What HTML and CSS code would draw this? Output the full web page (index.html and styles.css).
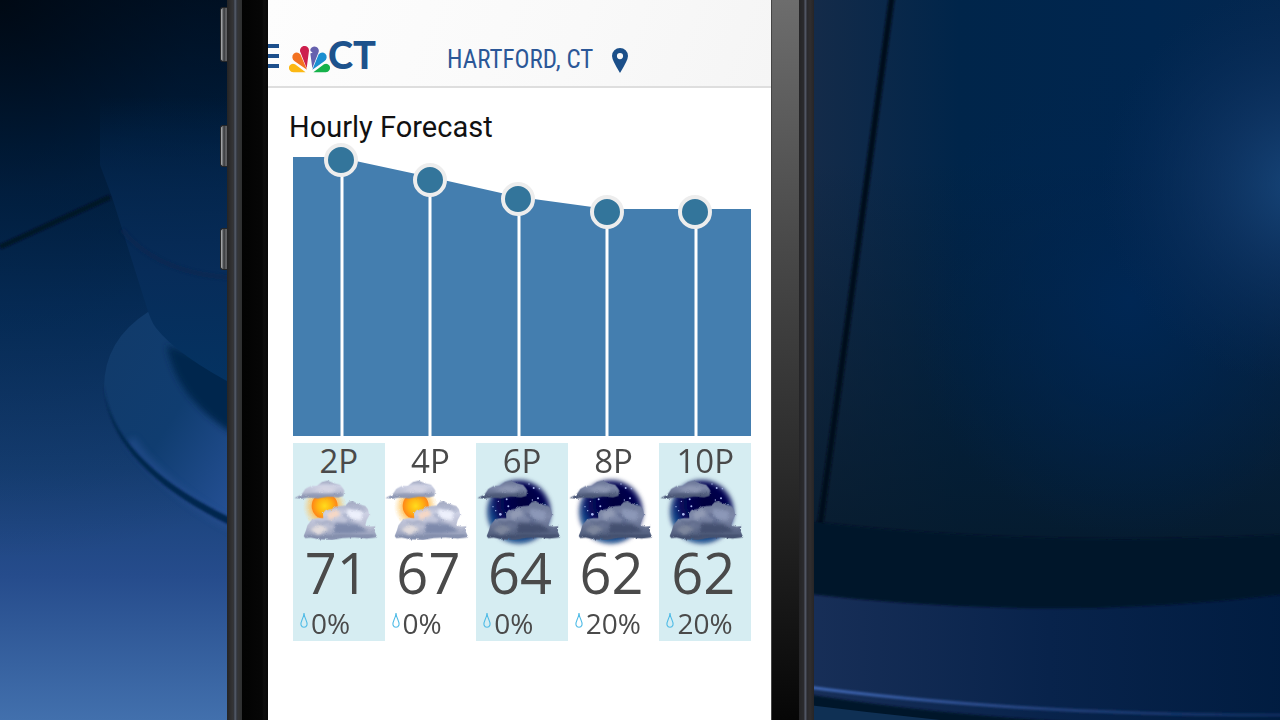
FILE: index.html
```
<!DOCTYPE html>
<html lang="en">
<head>
    <meta charset="UTF-8">
    <meta name="viewport" content="width=device-width, initial-scale=1.0">
    <title>Hourly Forecast - Hartford, CT</title>
    <link rel="stylesheet" href="styles.css">
</head>
<body>
    <!-- studio backdrop -->
    <svg class="backdrop" viewBox="0 0 1280 720" preserveAspectRatio="none" aria-hidden="true">
        <defs>
            <linearGradient id="leftBg" gradientUnits="userSpaceOnUse" x1="60" y1="0" x2="60" y2="720">
                <stop offset="0" stop-color="#001226"/>
                <stop offset=".2" stop-color="#002348"/>
                <stop offset=".42" stop-color="#063365"/>
                <stop offset=".65" stop-color="#164076"/>
                <stop offset=".8" stop-color="#264c8c"/>
                <stop offset="1" stop-color="#4270ad"/>
            </linearGradient>
            <linearGradient id="panelBg" x1="0" y1="0" x2="0" y2="1">
                <stop offset=".25" stop-color="#022750" stop-opacity="0"/>
                <stop offset=".5" stop-color="#052851" stop-opacity=".8"/>
                <stop offset=".7" stop-color="#072c59"/>
                <stop offset="1" stop-color="#043362"/>
            </linearGradient>
            <radialGradient id="leftShade" gradientUnits="userSpaceOnUse" cx="0" cy="0" r="560">
                <stop offset="0" stop-color="#00060e" stop-opacity=".75"/>
                <stop offset=".35" stop-color="#000c1c" stop-opacity=".35"/>
                <stop offset="1" stop-color="#000814" stop-opacity="0"/>
            </radialGradient>
            <linearGradient id="discBg" x1="0" y1="0" x2="1" y2="1">
                <stop offset="0" stop-color="#113a69"/>
                <stop offset=".5" stop-color="#103d70"/>
                <stop offset="1" stop-color="#28539a"/>
            </linearGradient>
            <linearGradient id="rightBg" x1="0" y1="0" x2="1" y2="0">
                <stop offset=".27" stop-color="#142b49"/>
                <stop offset=".5" stop-color="#00254a"/>
                <stop offset=".8" stop-color="#00264f"/>
                <stop offset="1" stop-color="#04274f"/>
            </linearGradient>
            <linearGradient id="rightShade" x1="0" y1="0" x2="0" y2="1">
                <stop offset=".3" stop-color="#061b2c" stop-opacity="0"/>
                <stop offset="1" stop-color="#061a2b" stop-opacity=".85"/>
            </linearGradient>
            <radialGradient id="glow">
                <stop offset="0" stop-color="#1a4a80"/>
                <stop offset=".4" stop-color="#12396a" stop-opacity=".75"/>
                <stop offset="1" stop-color="#0a2c5a" stop-opacity="0"/>
            </radialGradient>
            <radialGradient id="blueWash">
                <stop offset="0" stop-color="#002754"/>
                <stop offset="1" stop-color="#00244e" stop-opacity="0"/>
            </radialGradient>
            <linearGradient id="floorBg" x1="0" y1="0" x2="1" y2="0">
                <stop offset="0" stop-color="#182f58"/>
                <stop offset=".5" stop-color="#08234b"/>
                <stop offset="1" stop-color="#001c40"/>
            </linearGradient>
            <linearGradient id="rimBg" gradientUnits="userSpaceOnUse" x1="800" y1="0" x2="1300" y2="0">
                <stop offset="0" stop-color="#426ab8"/>
                <stop offset=".5" stop-color="#24427d"/>
                <stop offset="1" stop-color="#0e2c5c"/>
            </linearGradient>
            <filter id="soft"><feGaussianBlur stdDeviation="1"/></filter>
            <filter id="softer"><feGaussianBlur stdDeviation="3"/></filter>
        </defs>

        <rect width="640" height="720" fill="url(#leftBg)"/>
        <rect width="640" height="720" fill="url(#leftShade)"/>
        <path d="M0 247 L110 197" stroke="#001226" stroke-width="5" filter="url(#soft)"/>
        <path d="M148 312 Q104 340 104 388 C108 440 160 490 240 526 V330 Z" fill="url(#discBg)"/>
        <path d="M130 440 Q170 495 240 530" fill="none" stroke="#2a5397" stroke-width="10" opacity=".5" filter="url(#softer)"/>
        <path d="M104 384 C108 438 160 486 240 522 L240 530 C160 493 106 445 104 384 Z" fill="#03264e" filter="url(#soft)"/>
        <path d="M167 345 Q175 400 240 438 V370 Z" fill="#05284e" filter="url(#softer)"/>
        <path d="M100 0 V165 L112 197 L146 305 Q151 322 156 328 Q178 356 240 388 V0 Z" fill="url(#panelBg)"/>
        <path d="M122 230 Q160 276 240 278" fill="none" stroke="#0c2850" stroke-width="5" opacity=".6" filter="url(#soft)"/>

        <rect x="640" width="640" height="720" fill="url(#rightBg)"/>
        <rect x="640" width="640" height="540" fill="url(#rightShade)"/>
        <ellipse cx="1130" cy="300" rx="220" ry="240" fill="url(#blueWash)"/>
        <ellipse cx="1300" cy="185" rx="200" ry="200" fill="url(#glow)" opacity=".85"/>
        <path d="M892 -4 L820 526" stroke="#00101f" stroke-width="6" filter="url(#soft)"/>
        <path d="M800 590 Q1060 625 1300 590 V720 H800 Z" fill="url(#floorBg)"/>
        <path d="M800 520 Q1020 548 1300 534 V592 Q1060 624 800 593 Z" fill="#00122a" filter="url(#soft)"/>
        <path d="M800 693 Q940 716 1110 724 H800 Z" fill="#00152b" filter="url(#soft)"/>
        <path d="M800 686 Q1020 716 1300 715" fill="none" stroke="url(#rimBg)" stroke-width="3" filter="url(#soft)"/>
        <path d="M800 704 Q880 714 960 722 H800 Z" fill="#0f3054"/>
    </svg>

    <!-- shared icon drawings -->
    <svg class="sprite" aria-hidden="true">
        <defs>
            <filter id="ragged" x="-10%" y="-10%" width="120%" height="120%" color-interpolation-filters="sRGB">
                <feTurbulence type="fractalNoise" baseFrequency=".12" numOctaves="3" seed="8" result="noise"/>
                <feDisplacementMap in="SourceGraphic" in2="noise" scale="7" xChannelSelector="R" yChannelSelector="G"/>
            </filter>
            <filter id="haze" x="-20%" y="-20%" width="140%" height="140%"><feGaussianBlur stdDeviation="7"/></filter>
            <filter id="puff" x="-30%" y="-30%" width="160%" height="160%"><feGaussianBlur stdDeviation="4"/></filter>
            <radialGradient id="sunFill">
                <stop offset="0" stop-color="#ffdc1c"/>
                <stop offset=".55" stop-color="#ffb313"/>
                <stop offset="1" stop-color="#ff8418"/>
            </radialGradient>
            <radialGradient id="sunGlow">
                <stop offset=".5" stop-color="#ffb240" stop-opacity=".95"/>
                <stop offset=".75" stop-color="#ffc35a" stop-opacity=".5"/>
                <stop offset="1" stop-color="#ffd98a" stop-opacity="0"/>
            </radialGradient>
            <radialGradient id="nightFill" cx=".58" cy=".35" r=".68">
                <stop offset="0" stop-color="#03023c"/>
                <stop offset=".65" stop-color="#07085a"/>
                <stop offset="1" stop-color="#146aa8"/>
            </radialGradient>
            <linearGradient id="dayCloud" x1="0" y1="0" x2="0" y2="1">
                <stop offset="0" stop-color="#a0a7c0"/>
                <stop offset=".3" stop-color="#cdd1e4"/>
                <stop offset=".65" stop-color="#b8bdd2"/>
                <stop offset="1" stop-color="#8691b0"/>
            </linearGradient>
            <linearGradient id="nightCloud" x1="0" y1="0" x2="0" y2="1">
                <stop offset="0" stop-color="#6c7898"/>
                <stop offset=".4" stop-color="#7e89a9"/>
                <stop offset="1" stop-color="#465372"/>
            </linearGradient>
            <path id="cloudTop" d="M1 72 L22 62 L34 44 L50 36 L68 36 L84 24 L101 20 L122 28 L138 32 L146 42 L151 50 L148 66 L132 70 L102 67 L72 73 L40 70 L22 74 Z"/>
            <path id="cloudLow" d="M29 186 L36 168 L40 154 L54 136 L72 132 L88 132 L87 118 L94 108 L112 106 L126 98 L154 95 L164 84 L176 82 L196 91 L214 96 L222 106 L226 124 L218 138 L214 154 L230 158 L244 156 L242 172 L250 190 L218 194 L182 190 L146 192 L114 198 L72 196 L50 190 L34 192 Z"/>
        </defs>
        <symbol id="icon-day" viewBox="0 0 252 228">
            <circle cx="92" cy="98" r="66" fill="url(#sunGlow)" filter="url(#ragged)"/>
            <circle cx="92" cy="96" r="39" fill="url(#sunFill)"/>
            <g filter="url(#ragged)">
                <use href="#cloudTop" fill="url(#dayCloud)"/>
                <path d="M50 50 L90 35 L130 42 L112 56 Z" fill="#d6d6e4" filter="url(#puff)"/>
                <path d="M20 70 L60 62 L92 66 L142 60" fill="none" stroke="#7a84a2" stroke-width="6" opacity=".7" filter="url(#puff)"/>
                <use href="#cloudLow" fill="url(#dayCloud)"/>
                <path d="M98 120 L126 106 L140 122 L106 138 Z" fill="#f8d8c4" filter="url(#puff)"/>
                <path d="M160 104 L206 112 L202 140 L160 132 Z" fill="#edf0fc" filter="url(#puff)"/>
                <path d="M146 120 L166 134 L160 148 L180 144" fill="none" stroke="#9aa3c0" stroke-width="6" filter="url(#puff)"/>
                <path d="M160 96 L182 102 L196 98 L212 112" fill="none" stroke="#a2aac4" stroke-width="5" filter="url(#puff)"/>
                <path d="M48 166 L78 150 L104 166 L72 184 Z" fill="#e3ddde" filter="url(#puff)"/>
                <path d="M64 142 L84 150 L98 142 L120 152" fill="none" stroke="#9aa2bb" stroke-width="5" filter="url(#puff)"/>
                <path d="M124 146 L190 150 L222 172 L168 178 L118 178 Z" fill="#7482a6" opacity=".85" filter="url(#puff)"/>
                <path d="M36 188 L90 190 L140 184 L190 186 L240 184" fill="none" stroke="#6a7898" stroke-width="6" opacity=".7" filter="url(#puff)"/>
            </g>
        </symbol>
        <symbol id="icon-night" viewBox="0 0 252 228">
            <circle cx="126" cy="113" r="98" fill="#4a5689" opacity=".7" filter="url(#haze)"/>
            <circle cx="126" cy="113" r="90" fill="url(#nightFill)" filter="url(#haze)"/>
            <g fill="#aebdf2">
                <circle cx="70" cy="121" r="4"/>
                <circle cx="94" cy="97" r="3"/>
                <circle cx="89" cy="76" r="3"/>
                <circle cx="64" cy="82" r="2"/>
                <circle cx="48" cy="98" r="2"/>
                <circle cx="56" cy="110" r="2"/>
                <circle cx="170" cy="42" r="3"/>
                <circle cx="183" cy="73" r="3"/>
                <circle cx="156" cy="30" r="2"/>
                <circle cx="187" cy="44" r="2"/>
                <circle cx="166" cy="78" r="2"/>
                <circle cx="204" cy="92" r="2"/>
            </g>
            <g filter="url(#ragged)">
                <use href="#cloudTop" fill="url(#nightCloud)"/>
                <path d="M50 50 L90 35 L130 42 L112 56 Z" fill="#8e98b4" filter="url(#puff)"/>
                <path d="M20 70 L60 62 L92 66 L142 60" fill="none" stroke="#3d4868" stroke-width="6" opacity=".7" filter="url(#puff)"/>
                <use href="#cloudLow" fill="url(#nightCloud)"/>
                <path d="M98 116 L126 104 L140 122 L106 138 Z" fill="#929bb5" filter="url(#puff)"/>
                <path d="M160 104 L206 112 L202 140 L160 132 Z" fill="#8c98b8" filter="url(#puff)"/>
                <path d="M146 120 L166 134 L160 148 L180 144" fill="none" stroke="#58658a" stroke-width="6" filter="url(#puff)"/>
                <path d="M48 166 L78 150 L104 166 L72 184 Z" fill="#7e879d" filter="url(#puff)"/>
                <path d="M64 142 L84 150 L98 142 L120 152" fill="none" stroke="#566180" stroke-width="5" filter="url(#puff)"/>
                <path d="M124 146 L190 150 L222 172 L168 178 L118 178 Z" fill="#3d4969" opacity=".8" filter="url(#puff)"/>
                <path d="M36 188 L90 190 L140 184 L190 186 L240 184" fill="none" stroke="#35415f" stroke-width="6" opacity=".7" filter="url(#puff)"/>
            </g>
        </symbol>
        <symbol id="icon-drop" viewBox="0 0 8 16">
            <path d="M4 1 Q4 4 2 8 Q.6 11 1 13 Q1.8 15.2 4 15.2 Q6.2 15.2 7 13 Q7.4 11 6 8 Q4 4 4 1 Z" fill="none" stroke="#4fbbe6" stroke-width="1.1"/>
        </symbol>
    </svg>

    <main class="stage">
        <div class="phone">
            <div class="side side-left">
                <span class="key key-mute"></span>
                <span class="key key-up"></span>
                <span class="key key-down"></span>
            </div>
            <div class="bezel bezel-left"></div>

            <div class="screen">
                <header class="header">
                    <button class="menu-button" type="button" aria-label="Menu">
                        <svg class="menu-icon" viewBox="0 0 11 26">
                            <path d="M0 3h11M0 13h11M0 23h11" stroke="#1d4f8c" stroke-width="4"/>
                        </svg>
                    </button>
                    <a class="logo" href="#">
                        <svg class="peacock" viewBox="0 0 123 80" aria-hidden="true">
                            <path fill="#fcb813" d="M50 78 L13 78 A13 13 0 0 1 2 58 Q8 50 18 54 Z"/>
                            <path fill="#f37221" d="M54 71 L17 45 A14 14 0 0 1 14 23 Q24 14 34 24 Z"/>
                            <path fill="#cd1f4d" d="M53 66 L35 20 A13.500 13.500 0 1 1 60 14 Z"/>
                            <path fill="#6661ae" d="M70 66 L64 22 L71 19 L65 15 Q63 11 65 8 A12.500 12.500 0 0 1 88 20 Z"/>
                            <path fill="#1b8fd1" d="M70 71 L89 24 Q99 14 109 23 A14 14 0 0 1 106 45 Z"/>
                            <path fill="#16b24b" d="M73 78 L105 54 Q115 50 121 58 A13 13 0 0 1 110 78 Z"/>
                        </svg>
                        <span class="logo-text">CT</span>
                    </a>
                    <a class="location" href="#">
                        HARTFORD, CT
                        <svg class="pin" viewBox="0 0 16 25" aria-hidden="true">
                            <path fill="#1b4f89" fill-rule="evenodd" d="M8 0 A8 8 0 0 1 16 8 Q16 12 8 25 Q0 12 0 8 A8 8 0 0 1 8 0 Z M8 5 A3 3 0 1 0 8 11.200 A3 3 0 1 0 8 5 Z"/>
                        </svg>
                    </a>
                </header>

                <section class="forecast">
                    <h1 class="title">Hourly Forecast</h1>
                    <svg class="chart" viewBox="0 0 458 293" role="img" aria-label="Temperature trend">
                        <path fill="#447eaf" d="M0 14 H44 L137 34 L226 54 L314 66 H458 V293 H0 Z"/>
                        <path stroke="#fff" stroke-width="3" d="M49 17V293M137 37V293M226 56V293M314 69V293M403 69V293"/>
                        <g fill="#33759b" stroke="#ededed" stroke-width="4">
                            <circle cx="48" cy="17" r="15"/>
                            <circle cx="137" cy="37" r="15"/>
                            <circle cx="225" cy="56" r="15"/>
                            <circle cx="314" cy="69" r="15"/>
                            <circle cx="402" cy="69" r="15"/>
                        </g>
                    </svg>

                    <ol class="hours">
                        <li class="hour">
                            <span class="time">2P</span>
                            <svg class="weather" role="img" aria-label="Partly cloudy"><use href="#icon-day"/></svg>
                            <span class="temp">71</span>
                            <span class="rain"><svg class="drop"><use href="#icon-drop"/></svg>0%</span>
                        </li>
                        <li class="hour">
                            <span class="time">4P</span>
                            <svg class="weather" role="img" aria-label="Partly cloudy"><use href="#icon-day"/></svg>
                            <span class="temp">67</span>
                            <span class="rain"><svg class="drop"><use href="#icon-drop"/></svg>0%</span>
                        </li>
                        <li class="hour">
                            <span class="time">6P</span>
                            <svg class="weather" role="img" aria-label="Partly cloudy night"><use href="#icon-night"/></svg>
                            <span class="temp">64</span>
                            <span class="rain"><svg class="drop"><use href="#icon-drop"/></svg>0%</span>
                        </li>
                        <li class="hour">
                            <span class="time">8P</span>
                            <svg class="weather" role="img" aria-label="Partly cloudy night"><use href="#icon-night"/></svg>
                            <span class="temp">62</span>
                            <span class="rain"><svg class="drop"><use href="#icon-drop"/></svg>20%</span>
                        </li>
                        <li class="hour">
                            <span class="time">10P</span>
                            <svg class="weather" role="img" aria-label="Partly cloudy night"><use href="#icon-night"/></svg>
                            <span class="temp">62</span>
                            <span class="rain"><svg class="drop"><use href="#icon-drop"/></svg>20%</span>
                        </li>
                    </ol>
                </section>
            </div>

            <div class="bezel bezel-right"></div>
            <div class="side side-right"></div>
        </div>
    </main>
</body>
</html>
```
FILE: styles.css
```
* {
    margin: 0;
    padding: 0;
    box-sizing: border-box;
}

body {
    background: #00254a;
    font-family: Roboto, "Liberation Sans", sans-serif;
    overflow-x: hidden;
}

.backdrop {
    position: fixed;
    inset: 0;
    width: 100%;
    height: 100%;
    z-index: -1;
}

.sprite {
    position: absolute;
    width: 0;
    height: 0;
}

.stage {
    display: grid;
    grid-template-columns: 227fr 587fr 466fr;
    min-height: 100vh;
}

.phone {
    grid-column: 2;
    display: flex;
}

/* phone body */
.side {
    position: relative;
    flex: none;
    width: 15px;
}

.side-left {
    background: linear-gradient(90deg, #242425 0, #353536 6px, #30343c 7px, #5a6270 8px, #30343c 10px, #353637 11px, #2d2e2f 15px);
}

.side-right {
    background: linear-gradient(90deg, #242426 0, #2b2b2e 5px, #555a69 6px, #4b505d 7px, #29292d 8px, #302e2f 11px, #272526 15px);
}

.key {
    position: absolute;
    right: 100%;
    width: 7px;
    height: 42px;
    border: 1px solid #252729;
    border-right: 0;
    border-radius: 3px 0 0 3px;
    background: linear-gradient(90deg, #b3b5b7 0, #8d8f91 1px, #343639 3px, #68696c 5px, #4b4c4e 7px);
}

.key-mute {
    top: 7px;
    height: 55px;
}

.key-up {
    top: 125px;
}

.key-down {
    top: 228px;
}

.bezel {
    flex: none;
}

.bezel-left {
    width: 26px;
    background: linear-gradient(90deg, #020202, #060606 20px, #0d0d0d 22px, #080808);
}

.bezel-right {
    width: 28px;
    border-left: 1px solid #444;
    background: linear-gradient(#6d6d6d, #484848 35%, #2b2b2b 65%, #060606);
}

.screen {
    flex: 1;
    min-width: 0;
    background: #fff;
}

/* app header */
.header {
    display: flex;
    align-items: flex-end;
    padding: 35px 0 13px;
    border-bottom: 2px solid #dedede;
    background: linear-gradient(110deg, #fdfdfd, #f9f9f9 60%, #f5f5f5);
}

.menu-button {
    margin: 0 10px 4px 0;
    border: 0;
    background: none;
    cursor: pointer;
}

.menu-icon {
    display: block;
    width: 11px;
    height: 26px;
}

.logo {
    display: flex;
    align-items: flex-end;
    color: #1d528c;
    text-decoration: none;
}

.peacock {
    width: 41px;
    height: 27px;
}

.logo-text {
    margin-left: -2px;
    font-family: Lato, "Open Sans", sans-serif;
    font-size: 38px;
    font-weight: 900;
    line-height: 38px;
}

.location {
    display: flex;
    align-items: center;
    gap: 19px;
    margin-left: 71px;
    font-family: "Roboto Condensed", Roboto, sans-serif;
    font-size: 25px;
    line-height: 26px;
    color: #2b5797;
    text-decoration: none;
    white-space: nowrap;
}

.pin {
    width: 16px;
    height: 25px;
}

/* forecast */
.forecast {
    padding: 23px 20px 0 25px;
}

.title {
    margin-left: -4px;
    font-size: 29px;
    font-weight: 400;
    line-height: 32px;
    color: #111;
}

.chart {
    display: block;
    width: 100%;
}

.hours {
    display: grid;
    grid-template-columns: repeat(5, minmax(0, 1fr));
    margin-top: 7px;
    list-style: none;
    font-family: "Open Sans", "Noto Sans", sans-serif;
    color: #4a4a4a;
}

.hour {
    display: flex;
    flex-direction: column;
    align-items: center;
}

.hour:nth-child(odd) {
    background: #d6edf2;
}

.time {
    font-size: 33px;
    line-height: 36px;
}

.weather {
    width: 84px;
    height: 76px;
    margin: -5px 6px 0 0;
}

.temp {
    margin: 0 4px 12px 0;
    font-size: 56px;
    font-weight: 500;
    line-height: 44px;
}

.rain {
    display: flex;
    align-items: center;
    align-self: flex-start;
    gap: 3px;
    padding-left: 7px;
    font-size: 28px;
    font-weight: 500;
    line-height: 35px;
}

.drop {
    width: 8px;
    height: 16px;
    margin-bottom: 8px;
}
```
